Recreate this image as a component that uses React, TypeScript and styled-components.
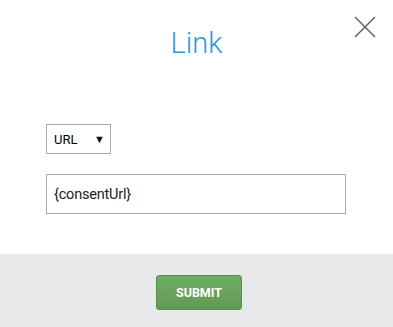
import styled, { createGlobalStyle } from "styled-components";

const Global = createGlobalStyle`
  html, body {
    margin: 0;
    padding: 0;
    background: #fff;
    font-family: Roboto, "Liberation Sans", Arial, sans-serif;
  }
`;

// Окно модального диалога
const Modal = styled.div`
  width: 393px;
  height: 327px;
  background: #fff;
  display: flex;
  flex-direction: column;
  position: relative;
  box-sizing: border-box;
`;

const Header = styled.div`
  display: flex;
  justify-content: center;
  padding-top: 26px;
  height: 64px;
  box-sizing: border-box;
`;

const Title = styled.h1`
  margin: 0;
  font-family: Roboto, "Liberation Sans", sans-serif;
  font-weight: 300;
  font-size: 29px;
  line-height: 34px;
  color: #3498d8;
`;

const CloseButton = styled.button`
  position: absolute;
  top: 16px;
  right: 17px;
  width: 22px;
  height: 22px;
  padding: 0;
  border: none;
  background: none;
  cursor: pointer;
  display: flex;
  align-items: center;
  justify-content: center;
`;

const Body = styled.div`
  flex: 1;
  display: flex;
  flex-direction: column;
  gap: 20px;
  padding: 60px 46px 0;
`;

const Select = styled.div`
  width: 65px;
  height: 30px;
  box-sizing: border-box;
  border: 1px solid #a4aab0;
  display: flex;
  align-items: center;
  justify-content: space-between;
  padding: 0 5px 0 7px;
  font-size: 13px;
  color: #000;
`;

const Arrow = styled.span`
  font-size: 11px;
  color: #111;
`;

const Input = styled.div`
  width: 300px;
  height: 40px;
  box-sizing: border-box;
  border: 1px solid #a4aab0;
  display: flex;
  align-items: center;
  padding: 0 7px;
  font-size: 14.5px;
  letter-spacing: -0.2px;
  color: #222;
`;

const Footer = styled.div`
  height: 73px;
  background: #e8e9eb;
  display: flex;
  align-items: center;
  justify-content: center;
  padding: 3px 0 0 5px;
  box-sizing: border-box;
`;

const SubmitButton = styled.button`
  width: 86px;
  height: 35px;
  border: 1px solid #5b8c52;
  border-radius: 3px;
  background: linear-gradient(#6fad63, #619a56);
  color: #fff;
  font-family: Roboto, "Liberation Sans", sans-serif;
  font-weight: 700;
  font-size: 12.5px;
  cursor: pointer;
`;

export default function App() {
  return (
    <>
      <Global />
      <Modal>
        <Header>
          <Title>Link</Title>
        </Header>
        <CloseButton aria-label="close">
          <svg width="22" height="22" viewBox="0 0 22 22">
            <path d="M1 1 L21 21 M21 1 L1 21" stroke="#5f6368" strokeWidth="1.5" />
          </svg>
        </CloseButton>
        <Body>
          <Select>
            URL
            <Arrow>▼</Arrow>
          </Select>
          <Input>{"{consentUrl}"}</Input>
        </Body>
        <Footer>
          <SubmitButton>SUBMIT</SubmitButton>
        </Footer>
      </Modal>
    </>
  );
}
